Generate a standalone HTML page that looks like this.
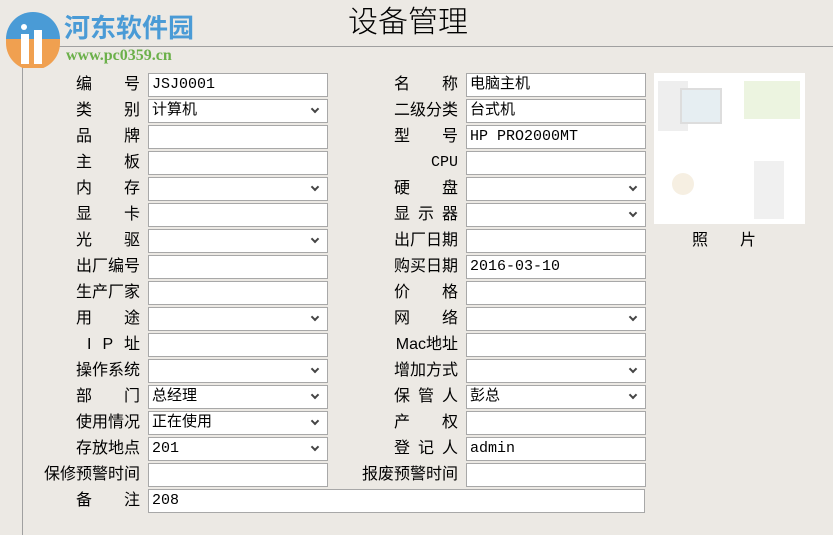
<!DOCTYPE html><html><head><meta charset="utf-8"><style>
body{margin:0;width:833px;height:535px;background:#ECE9E4;position:relative;overflow:hidden;font-family:"Liberation Sans","Noto Sans CJK SC",sans-serif;color:#000}
.a{position:absolute}
.lbl{position:absolute;height:24px;line-height:24px;font-size:16px;text-align:justify;text-align-last:justify;white-space:nowrap}
.in{position:absolute;width:180px;background:#fff;border:1px solid #A8A8A8;font-family:"Liberation Mono","Noto Sans CJK SC",monospace;font-size:15px;line-height:22px;padding-left:3px;box-sizing:border-box;height:24px}
.sel::after{content:"";position:absolute;right:9px;top:6px;width:4px;height:4px;border-right:2px solid #444;border-bottom:2px solid #444;transform:rotate(45deg)}
</style></head><body>
<div class="a" style="left:22px;top:46px;width:811px;height:1px;background:#A0A0A0"></div>
<div class="a" style="left:22px;top:46px;width:1px;height:489px;background:#A0A0A0"></div>
<svg class="a" style="left:4px;top:10px" width="58" height="58" viewBox="0 0 58 58"><circle cx="29" cy="29" r="27" fill="#4A9BD6"/><path d="M2 33 A27 27 0 0 0 56 33 L56 29 L2 29Z" fill="#F0A050"/><rect x="17" y="24" width="8" height="30" fill="#fff"/><rect x="30" y="20" width="8" height="34" fill="#fff"/><circle cx="20" cy="17" r="3" fill="#fff"/></svg>
<div class="a" style="left:64px;top:12px;font-size:26px;font-weight:bold;color:#4A9BD6;font-family:'Noto Sans CJK SC',sans-serif;line-height:30px">河东软件园</div>
<div class="a" style="left:66px;top:47px;font-size:16px;font-weight:bold;color:#6BB04A;font-family:'Liberation Serif',serif">www.pc0359.cn</div>
<div class="a" style="left:348px;top:0px;font-size:30px;line-height:38px;font-family:'Noto Sans CJK SC',sans-serif;font-weight:300">设备管理</div>
<div class="a" style="left:654px;top:73px;width:151px;height:151px;background:#fff">
<div class="a" style="left:4px;top:8px;width:30px;height:50px;background:#eeeeee"></div>
<div class="a" style="left:26px;top:15px;width:38px;height:32px;background:#e6eef2;border:2px solid #ddd"></div>
<div class="a" style="left:90px;top:8px;width:56px;height:38px;background:#ecf4e0"></div>
<div class="a" style="left:18px;top:100px;width:22px;height:22px;border-radius:50%;background:#f6efe2"></div>
<div class="a" style="left:100px;top:88px;width:30px;height:58px;background:#f0f0f0"></div>
</div>
<div class="lbl" style="left:692px;top:229px;width:64px">照 片</div>

<div class="lbl" style="left:76px;top:73px;width:64px">编 号</div><div class="in" style="left:148px;top:73px">JSJ0001</div>
<div class="lbl" style="left:76px;top:99px;width:64px">类 别</div><div class="in sel" style="left:148px;top:99px">计算机</div>
<div class="lbl" style="left:76px;top:125px;width:64px">品 牌</div><div class="in" style="left:148px;top:125px"></div>
<div class="lbl" style="left:76px;top:151px;width:64px">主 板</div><div class="in" style="left:148px;top:151px"></div>
<div class="lbl" style="left:76px;top:177px;width:64px">内 存</div><div class="in sel" style="left:148px;top:177px"></div>
<div class="lbl" style="left:76px;top:203px;width:64px">显 卡</div><div class="in" style="left:148px;top:203px"></div>
<div class="lbl" style="left:76px;top:229px;width:64px">光 驱</div><div class="in sel" style="left:148px;top:229px"></div>
<div class="lbl" style="left:76px;top:255px;width:64px">出厂编号</div><div class="in" style="left:148px;top:255px"></div>
<div class="lbl" style="left:76px;top:281px;width:64px">生产厂家</div><div class="in" style="left:148px;top:281px"></div>
<div class="lbl" style="left:76px;top:307px;width:64px">用 途</div><div class="in sel" style="left:148px;top:307px"></div>
<div class="lbl" style="left:76px;top:333px;width:64px">&nbsp;I P 址</div><div class="in" style="left:148px;top:333px"></div>
<div class="lbl" style="left:76px;top:359px;width:64px">操作系统</div><div class="in sel" style="left:148px;top:359px"></div>
<div class="lbl" style="left:76px;top:385px;width:64px">部 门</div><div class="in sel" style="left:148px;top:385px">总经理</div>
<div class="lbl" style="left:76px;top:411px;width:64px">使用情况</div><div class="in sel" style="left:148px;top:411px">正在使用</div>
<div class="lbl" style="left:76px;top:437px;width:64px">存放地点</div><div class="in sel" style="left:148px;top:437px">201</div>
<div class="lbl" style="left:44px;top:463px;width:96px">保修预警时间</div><div class="in" style="left:148px;top:463px"></div>
<div class="lbl" style="left:76px;top:489px;width:64px">备 注</div><div class="in" style="left:148px;top:489px;width:497px">208</div>

<div class="lbl" style="left:394px;top:73px;width:64px">名 称</div><div class="in" style="left:466px;top:73px">电脑主机</div>
<div class="lbl" style="left:394px;top:99px;width:64px">二级分类</div><div class="in" style="left:466px;top:99px">台式机</div>
<div class="lbl" style="left:394px;top:125px;width:64px">型 号</div><div class="in" style="left:466px;top:125px">HP PRO2000MT</div>
<div class="lbl" style="left:394px;top:151px;width:64px;text-align:right;text-align-last:right;font-family:'Liberation Mono',monospace;font-size:15px">CPU</div><div class="in" style="left:466px;top:151px"></div>
<div class="lbl" style="left:394px;top:177px;width:64px">硬 盘</div><div class="in sel" style="left:466px;top:177px"></div>
<div class="lbl" style="left:394px;top:203px;width:64px">显 示 器</div><div class="in sel" style="left:466px;top:203px"></div>
<div class="lbl" style="left:394px;top:229px;width:64px">出厂日期</div><div class="in" style="left:466px;top:229px"></div>
<div class="lbl" style="left:394px;top:255px;width:64px">购买日期</div><div class="in" style="left:466px;top:255px">2016-03-10</div>
<div class="lbl" style="left:394px;top:281px;width:64px">价 格</div><div class="in" style="left:466px;top:281px"></div>
<div class="lbl" style="left:394px;top:307px;width:64px">网 络</div><div class="in sel" style="left:466px;top:307px"></div>
<div class="lbl" style="left:394px;top:333px;width:64px;text-align:right;text-align-last:right">Mac地址</div><div class="in" style="left:466px;top:333px"></div>
<div class="lbl" style="left:394px;top:359px;width:64px">增加方式</div><div class="in sel" style="left:466px;top:359px"></div>
<div class="lbl" style="left:394px;top:385px;width:64px">保 管 人</div><div class="in sel" style="left:466px;top:385px">彭总</div>
<div class="lbl" style="left:394px;top:411px;width:64px">产 权</div><div class="in" style="left:466px;top:411px"></div>
<div class="lbl" style="left:394px;top:437px;width:64px">登 记 人</div><div class="in" style="left:466px;top:437px">admin</div>
<div class="lbl" style="left:362px;top:463px;width:96px">报废预警时间</div><div class="in" style="left:466px;top:463px"></div>
</body></html>
